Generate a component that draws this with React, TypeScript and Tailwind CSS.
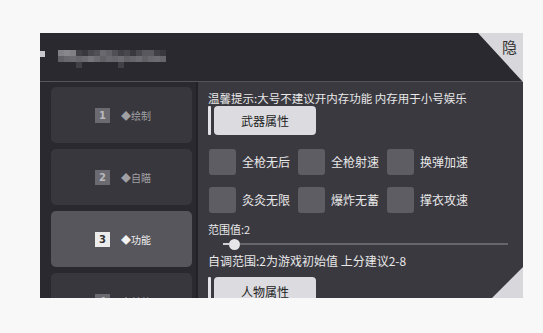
import React from 'react';

const cjk = { fontFamily: '"Noto Sans CJK SC", "Noto Sans", sans-serif' };

// blurred title, drawn as a mosaic of grey cells
const mosaic: number[][] = [
  [0.55, 0.6, 0.55, 0.15, 0.1, 0.2, 0.25, 0.4, 0.35, 0.25, 0.15, 0.2, 0.1, 0.2, 0.3, 0.3, 0.15, 0.1],
  [0.35, 0.4, 0.42, 0.38, 0.42, 0.48, 0.42, 0.35, 0.4, 0.38, 0.42, 0.35, 0.38, 0.42, 0.35, 0.4, 0.42, 0.38],
  [0, 0, 0, 0.15, 0, 0, 0, 0, 0, 0, 0.15, 0, 0, 0, 0, 0, 0, 0],
];

const tabs = [
  { n: '1', label: '◆绘制' },
  { n: '2', label: '◆自瞄' },
  { n: '3', label: '◆功能', active: true },
  { n: '4', label: '◆其他' },
];

const checks = ['全枪无后', '全枪射速', '换弹加速', '灸灸无限', '爆炸无蓄', '撑衣攻速'];

function SectionButton({ label }: { label: string }) {
  return (
    <div className="flex h-[29px] items-stretch gap-[3px]">
      <div className="w-[3px] rounded-[1px] bg-[#e4e4e8]" />
      <div className="flex w-[102px] items-center justify-center rounded-[4px] bg-[#dcdce0] text-[12px] text-[#222]">
        {label}
      </div>
    </div>
  );
}

export default function App() {
  return (
    <div className="h-[333px] w-[543px] overflow-hidden bg-[#f8f8f8] pl-[40px] pt-[33px]" style={cjk}>
      <div className="flex h-[265px] w-[483px] flex-col overflow-hidden bg-[#2a292f]">
        {/* header */}
        <div className="relative flex h-[48px] shrink-0 items-center">
          <div className="mb-[6px] h-[6px] w-[5px] bg-[#c8c8cc]" />
          <div className="ml-[13px] mt-[4px] flex flex-col">
            {mosaic.map((row, r) => (
              <div key={r} className="flex">
                {row.map((o, c) => (
                  <div key={c} className="h-[6px] w-[6px] bg-[#c8c8cc]" style={{ opacity: o }} />
                ))}
              </div>
            ))}
          </div>
          <div className="absolute right-0 top-0 h-[49px] w-[45px] bg-[#d8d8dc] [clip-path:polygon(0_0,100%_0,100%_100%)]" />
          <span className="absolute right-[6px] top-[3px] text-[15px] text-[#333]">隐</span>
        </div>
        <div className="h-px shrink-0 bg-[#55545a]" />

        {/* body */}
        <div className="flex min-h-0 flex-1">
          <div className="flex w-[156px] shrink-0 flex-col gap-[6px] pl-[11px] pr-[4px] pt-[5px]">
            {tabs.map((t) => (
              <div
                key={t.n}
                className={`flex h-[56px] shrink-0 items-center rounded-[5px] pl-[44px] ${t.active ? 'bg-[#57565c]' : 'bg-[#38373d]'}`}
              >
                <div
                  className={`flex h-[15px] w-[15px] items-center justify-center text-[10px] font-bold ${t.active ? 'bg-[#ececec] text-[#333]' : 'bg-[#6b6a70] text-[#b8b8bc]'}`}
                  style={{ fontFamily: '"DejaVu Sans", sans-serif' }}
                >
                  {t.n}
                </div>
                <span className={`ml-[11px] text-[10px] ${t.active ? 'text-[#f2f2f2]' : 'text-[#a0a0a4]'}`}>{t.label}</span>
              </div>
            ))}
          </div>
          <div className="w-[2px] shrink-0 bg-[#222126]" />

          <div className="relative flex-1 overflow-hidden bg-[#3a3940] pl-[10px] pt-[9px] text-[#e8e8e8]">
            <div className="h-[14px] text-[11.5px] leading-[14px]">温馨提示:大号不建议开内存功能 内存用于小号娱乐</div>
            <div className="mt-[1px]">
              <SectionButton label="武器属性" />
            </div>

            <div className="ml-px mt-[14px] grid grid-cols-[89px_89px_89px] gap-y-[12px]">
              {checks.map((c) => (
                <div key={c} className="flex h-[26px] items-center">
                  <div className="h-[26px] w-[27px] rounded-[3px] bg-[#5e5d63]" />
                  <span className="ml-[6px] text-[12px]">{c}</span>
                </div>
              ))}
            </div>

            <div className="mt-[9px] h-[14px] text-[11px] leading-[14px]">范围值:2</div>

            <div className="ml-[15px] mt-[2px] flex h-[12px] w-[285px] items-center">
              <div className="h-[2px] w-[6px] bg-[#d0d0d4]" />
              <div className="h-[11px] w-[11px] shrink-0 rounded-full bg-[#e6e6e8]" />
              <div className="h-[2px] flex-1 bg-[#66656b]" />
            </div>

            <div className="mt-[4px] h-[14px] text-[12px] leading-[14px]">自调范围:2为游戏初始值 上分建议2-8</div>

            <div className="mt-[9px]">
              <SectionButton label="人物属性" />
            </div>

            <div className="absolute bottom-0 right-0 h-[31px] w-[31px] bg-[#d8d8dc] [clip-path:polygon(100%_0,100%_100%,0_100%)]" />
          </div>
        </div>
      </div>
    </div>
  );
}
